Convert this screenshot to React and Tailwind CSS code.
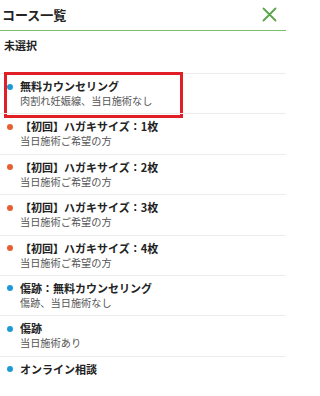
import React from 'react';

const courses = [
    { title: '無料カウンセリング', sub: '肉割れ妊娠線、当日施術なし', color: 'blue', selected: true },
    { title: '【初回】ハガキサイズ：1枚', sub: '当日施術ご希望の方', color: 'orange' },
    { title: '【初回】ハガキサイズ：2枚', sub: '当日施術ご希望の方', color: 'orange' },
    { title: '【初回】ハガキサイズ：3枚', sub: '当日施術ご希望の方', color: 'orange' },
    { title: '【初回】ハガキサイズ：4枚', sub: '当日施術ご希望の方', color: 'orange' },
    { title: '傷跡：無料カウンセリング', sub: '傷跡、当日施術なし', color: 'blue' },
    { title: '傷跡', sub: '当日施術あり', color: 'blue' },
    { title: 'オンライン相談', sub: '', color: 'blue' },
];

function CourseRow({ course }) {
    return (
        <div className="relative h-[40.4px] border-t border-[#ececec] pl-[20px] pt-[5px]">
            <span className={`absolute left-[6.5px] top-[9.5px] h-[6px] w-[6px] rounded-full ${course.color === 'blue' ? 'bg-[#1d9ad6]' : 'bg-[#e5602e]'}`}></span>
            <p className="text-[11px] font-bold leading-[14px] text-[#222]">{course.title}</p>
            {course.sub && <p className="mt-[1px] text-[10.2px] leading-[14px] text-[#555]">{course.sub}</p>}
            {course.selected && <div className="absolute left-[4px] top-[-2px] h-[46px] w-[179px] border-[3px] border-[#e01f27]"></div>}
        </div>
    );
}

export default function App() {
    return (
        <div className="h-[396px] w-[286px] overflow-hidden bg-white" style={{ fontFamily: '"Noto Sans CJK JP", "Noto Sans", sans-serif' }}>
            <div className="flex h-[31px] items-center justify-between border-b border-[#7cbf6b] pl-[2px] pr-[9px]">
                <h1 className="text-[13px] font-bold text-[#222]">コース一覧</h1>
                <svg width="15" height="15" viewBox="0 0 15 15" className="mt-[-2px]">
                    <path d="M1.5 1.5 L13.5 13.5 M13.5 1.5 L1.5 13.5" stroke="#5aa54a" strokeWidth="1.8" strokeLinecap="round" />
                </svg>
            </div>
            <div className="h-[42px] pl-[4px] pt-[7px]">
                <p className="text-[11px] font-bold leading-[14px] text-[#222]">未選択</p>
            </div>
            {courses.map((c, i) => <CourseRow key={i} course={c} />)}
        </div>
    );
}
